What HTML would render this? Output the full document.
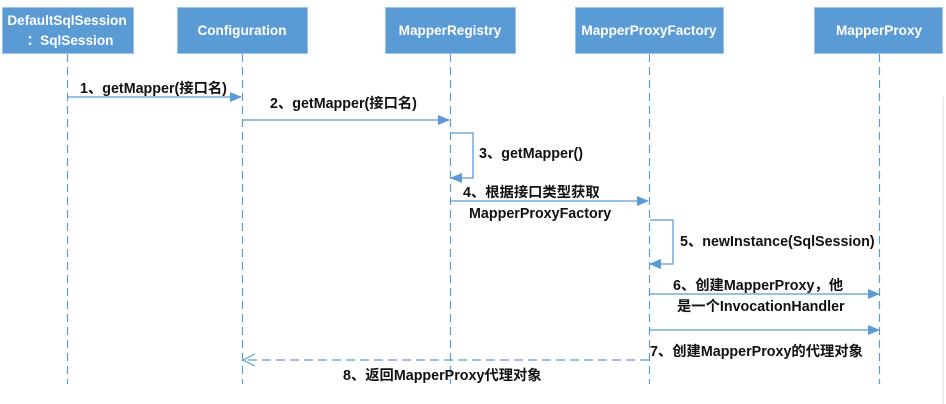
<!DOCTYPE html><html><head><meta charset="utf-8"><style>body{margin:0;background:#fff}svg{display:block}text{font-family:"Liberation Sans","Noto Sans CJK SC",sans-serif;font-weight:bold;font-size:14.3px;fill:#111}.b{fill:#fff;font-size:13.6px}</style></head><body>
<svg width="946" height="404" viewBox="0 0 946 404">
<defs><marker id="a" markerWidth="12" markerHeight="10" refX="11" refY="5" orient="auto" markerUnits="userSpaceOnUse"><path d="M0,0L12,5L0,10z" fill="#5b9bd5"/></marker>
<marker id="o" markerWidth="14" markerHeight="14" refX="13" refY="6" orient="auto" markerUnits="userSpaceOnUse"><path d="M1,0L13,6L1,12" fill="none" stroke="#5b9bd5" stroke-width="1.2"/></marker></defs>
<g fill="#5b9bd5" stroke="#9dc3e6" stroke-width="1">
<rect x="2.5" y="7.5" width="131" height="46"/><rect x="177.5" y="7.5" width="130" height="46"/><rect x="385.5" y="7.5" width="130" height="46"/><rect x="575.5" y="7.5" width="148" height="46"/><rect x="814.5" y="7.5" width="128" height="46"/></g>
<text class="b" x="67" y="25" text-anchor="middle">DefaultSqlSession</text><text class="b" x="70" y="45" text-anchor="middle">：SqlSession</text>
<text class="b" x="242" y="35" text-anchor="middle">Configuration</text><text class="b" x="450" y="35" text-anchor="middle">MapperRegistry</text><text class="b" x="649" y="35" text-anchor="middle">MapperProxyFactory</text><text class="b" x="879" y="35" text-anchor="middle">MapperProxy</text>
<g stroke="#5b9bd5" stroke-width="1.2" stroke-dasharray="8,5" fill="none"><path d="M67.5 54V384M242.5 54V384M450.5 54V384M649.5 54V384M879.5 54V384"/></g>
<line x1="943" y1="97" x2="943" y2="404" stroke="#ddd"/>
<g stroke="#5b9bd5" stroke-width="1.3" fill="none">
<path d="M68 97H241" marker-end="url(#a)"/><path d="M243 120H449" marker-end="url(#a)"/>
<path d="M451 133H473V178H451" marker-end="url(#a)"/><path d="M451 201H648" marker-end="url(#a)"/>
<path d="M650 220H673V264H650" marker-end="url(#a)"/><path d="M650 294H879" marker-end="url(#a)"/><path d="M650 330H879" marker-end="url(#a)"/>
<path d="M649 360H243" stroke-dasharray="9,5" marker-end="url(#o)"/></g>
<text x="80" y="93">1、getMapper(接口名)</text><text x="270" y="108">2、getMapper(接口名)</text>
<text x="479" y="158">3、getMapper()</text><text x="463" y="197">4、根据接口类型获取</text><text x="469" y="218">MapperProxyFactory</text>
<text x="680" y="246">5、newInstance(SqlSession)</text><text x="673" y="290">6、创建MapperProxy，他</text><text x="677" y="311">是一个InvocationHandler</text>
<text x="650" y="356">7、创建MapperProxy的代理对象</text><text x="343" y="380">8、返回MapperProxy代理对象</text>
</svg></body></html>
